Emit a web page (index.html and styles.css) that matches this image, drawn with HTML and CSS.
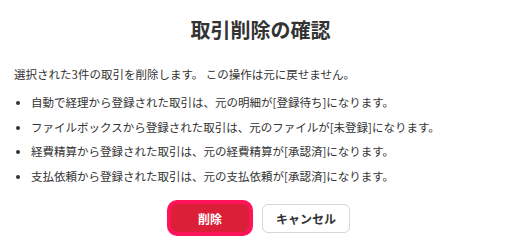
FILE: index.html
```html
<!DOCTYPE html>
<html lang="ja">
<head>
<meta charset="utf-8">
<link rel="stylesheet" href="styles.css">
</head>
<body>
<div class="dialog">
  <h2 class="title">取引削除の確認</h2>
  <p class="lead">選択された3件の取引を削除します。 この操作は元に戻せません。</p>
  <ul class="notes">
    <li>自動で経理から登録された取引は、元の明細が[登録待ち]になります。</li>
    <li>ファイルボックスから登録された取引は、元のファイルが[未登録]になります。</li>
    <li>経費精算から登録された取引は、元の経費精算が[承認済]になります。</li>
    <li>支払依頼から登録された取引は、元の支払依頼が[承認済]になります。</li>
  </ul>
  <div class="actions">
    <button class="btn btn-danger">削除</button>
    <button class="btn btn-default">キャンセル</button>
  </div>
</div>
</body>
</html>
```
FILE: styles.css
```css
html, body {
  margin: 0;
  padding: 0;
  background: #fff;
}
body {
  font-family: "Noto Sans CJK JP", "Noto Sans", sans-serif;
  color: #333;
  width: 521px;
  height: 247px;
  overflow: hidden;
}
.dialog {
  padding: 16px 14px 0 14px;
}
.title {
  margin: 0;
  font-size: 20px;
  line-height: 28px;
  font-weight: 700;
  text-align: center;
  color: #333;
}
.lead {
  margin: 21px 0 0 0;
  font-size: 11.5px;
  line-height: 18px;
}
.notes {
  margin: 10px 0 0 0;
  padding: 0 0 0 17px;
  font-size: 11.5px;
  line-height: 18px;
}
.notes li {
  margin-bottom: 6.5px;
}
.notes li:last-child {
  margin-bottom: 0;
}
.actions {
  display: flex;
  justify-content: center;
  align-items: center;
  gap: 13px;
  margin-top: 19px;
}
.btn {
  font-family: "Noto Sans CJK JP", "Noto Sans", sans-serif;
  font-size: 12px;
  font-weight: 700;
  border-radius: 6px;
  height: 29px;
  padding: 0 13px;
  min-width: 78px;
  cursor: pointer;
}
.btn-danger {
  background: #dc1f38;
  color: #fff;
  border: 1px solid #dc1f38;
  height: 28px;
  box-shadow: 0 0 0 4px #ff1459;
}
.btn-default {
  background: #fff;
  color: #333;
  border: 1px solid #d6d6d6;
}
```
